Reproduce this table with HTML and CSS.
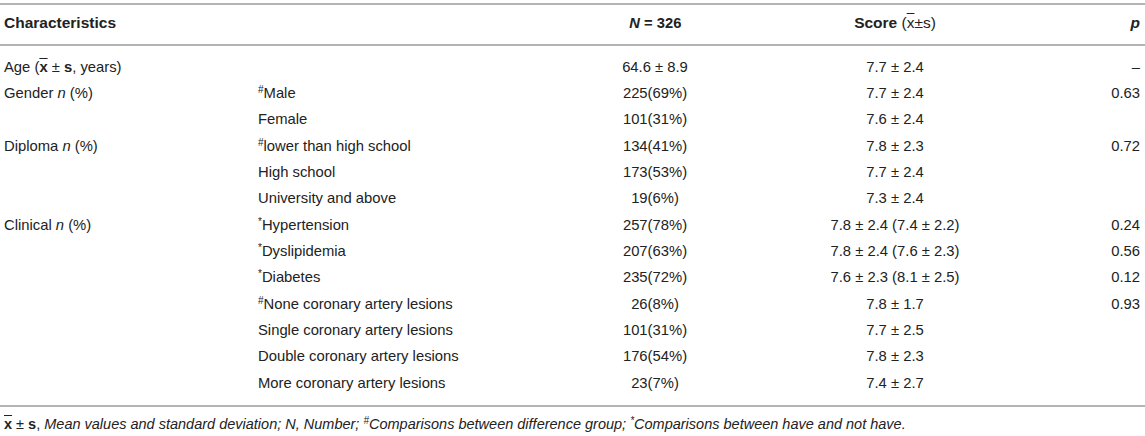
FILE: index.html
```html
<!DOCTYPE html>
<html>
<head>
<meta charset="utf-8">
<link rel="stylesheet" href="styles.css">
</head>
<body>
<div class="wrap">
<table class="tbl">
  <colgroup>
    <col class="c1"><col class="c2"><col class="c3"><col class="c4"><col class="c5">
  </colgroup>
  <thead>
    <tr>
      <th class="l">Characteristics</th>
      <th></th>
      <th class="c"><span class="cond"><i>N</i> = 326</span></th>
      <th class="c">Score <span class="lt">(<span class="ov">x</span>±s)</span></th>
      <th class="r"><i>p</i></th>
    </tr>
  </thead>
  <tbody>
    <tr class="first"><td>Age (<b class="ov">x</b> ± <b>s</b>, years)</td><td></td><td class="c">64.6 ± 8.9</td><td class="c">7.7 ± 2.4</td><td class="r">–</td></tr>
    <tr><td>Gender <i>n</i> (%)</td><td><sup>#</sup>Male</td><td class="c">225(69%)</td><td class="c">7.7 ± 2.4</td><td class="r">0.63</td></tr>
    <tr><td></td><td>Female</td><td class="c">101(31%)</td><td class="c">7.6 ± 2.4</td><td class="r"></td></tr>
    <tr><td>Diploma <i>n</i> (%)</td><td><sup>#</sup>lower than high school</td><td class="c">134(41%)</td><td class="c">7.8 ± 2.3</td><td class="r">0.72</td></tr>
    <tr><td></td><td>High school</td><td class="c">173(53%)</td><td class="c">7.7 ± 2.4</td><td class="r"></td></tr>
    <tr><td></td><td>University and above</td><td class="c">19(6%)</td><td class="c">7.3 ± 2.4</td><td class="r"></td></tr>
    <tr><td>Clinical <i>n</i> (%)</td><td><sup>*</sup>Hypertension</td><td class="c">257(78%)</td><td class="c">7.8 ± 2.4 (7.4 ± 2.2)</td><td class="r">0.24</td></tr>
    <tr><td></td><td><sup>*</sup>Dyslipidemia</td><td class="c">207(63%)</td><td class="c">7.8 ± 2.4 (7.6 ± 2.3)</td><td class="r">0.56</td></tr>
    <tr><td></td><td><sup>*</sup>Diabetes</td><td class="c">235(72%)</td><td class="c">7.6 ± 2.3 (8.1 ± 2.5)</td><td class="r">0.12</td></tr>
    <tr><td></td><td><sup>#</sup>None coronary artery lesions</td><td class="c">26(8%)</td><td class="c">7.8 ± 1.7</td><td class="r">0.93</td></tr>
    <tr><td></td><td>Single coronary artery lesions</td><td class="c">101(31%)</td><td class="c">7.7 ± 2.5</td><td class="r"></td></tr>
    <tr><td></td><td>Double coronary artery lesions</td><td class="c">176(54%)</td><td class="c">7.8 ± 2.3</td><td class="r"></td></tr>
    <tr class="last"><td></td><td>More coronary artery lesions</td><td class="c">23(7%)</td><td class="c">7.4 ± 2.7</td><td class="r"></td></tr>
  </tbody>
</table>
<p class="note"><b class="ov">x</b> ± <b>s</b>, <i>Mean values and standard deviation; N, Number; <sup>#</sup>Comparisons between difference group; <sup>*</sup>Comparisons between have and not have.</i></p>
</div>
</body>
</html>
```
FILE: styles.css
```css
html, body {
  margin: 0;
  padding: 0;
  background: #fff;
}
body {
  font-family: "Liberation Sans", Arial, Helvetica, sans-serif;
  font-size: 14.8px;
  color: #222;
}
.wrap {
  padding-top: 3px;
}
.tbl {
  width: 1145px;
  border-collapse: collapse;
  table-layout: fixed;
  border-top: 2px solid #b4b4b4;
  border-bottom: 2px solid #b4b4b4;
}
.c1 { width: 254px; }
.c2 { width: 286px; }
.c3 { width: 230px; }
.c4 { width: 250px; }
.c5 { width: 125px; }
.tbl th {
  font-size: 15.5px;
  font-weight: bold;
  height: 36px;
  padding: 0 4px 3px;
  border-bottom: 2px solid #b4b4b4;
  vertical-align: middle;
}
.cond {
  display: inline-block;
  transform: scaleX(0.95);
}
.tbl td {
  height: 26.33px;
  padding: 0 4px;
  line-height: 17px;
  vertical-align: middle;
  white-space: nowrap;
}
.tbl tr.first td {
  padding-top: 8px;
}
.tbl tr.last td {
  padding-bottom: 9px;
}
.l { text-align: left; }
.c { text-align: center; }
.r { text-align: right; }
.tbl th.r, .tbl td.r { padding-right: 5px; }
.lt { font-weight: normal; }
.ov { text-decoration: overline; }
sup {
  font-size: 10px;
  vertical-align: 5px;
  line-height: 0;
}
.note {
  margin: 9px 0 0 4px;
  font-size: 14.5px;
  line-height: 17px;
}
```
